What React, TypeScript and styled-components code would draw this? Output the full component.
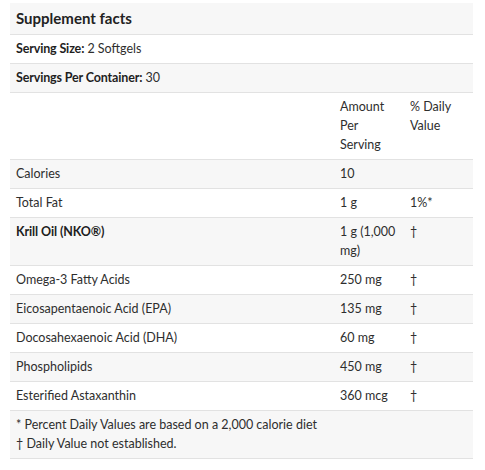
import React, { FC } from 'react';
import styled, { createGlobalStyle } from 'styled-components';

const GlobalStyle = createGlobalStyle`
  body {
    margin: 0;
    background: #ffffff;
    font-family: Lato, "Open Sans", sans-serif;
    color: #2e2e2e;
  }
`;

const Wrapper = styled.div`
  padding: 3px 12px 0 10px;
`;

const Table = styled.table`
  width: 463px;
  border-collapse: collapse;
  font-size: 12.5px;
  line-height: 19px;
`;

const Row = styled.tr<{ $shade?: boolean }>`
  background: ${(p) => (p.$shade ? '#f7f7f7' : '#ffffff')};
  border-bottom: 1px solid #e2e2e2;
`;

const Cell = styled.td<{ $strong?: boolean }>`
  padding: 4px 6px 5px 6px;
  vertical-align: top;
  font-weight: ${(p) => (p.$strong ? 700 : 400)};
  letter-spacing: ${(p) => (p.$strong ? '-0.1px' : 'normal')};
  color: ${(p) => (p.$strong ? '#1e1e1e' : 'inherit')};
`;

const TitleCell = styled.td`
  padding: 5px 6px 5px 6px;
  font-size: 15px;
  line-height: 21px;
  font-weight: 700;
  color: #222222;
`;

const Label = styled.b`
  font-weight: 700;
  letter-spacing: -0.15px;
  color: #1e1e1e;
`;

const LabelCol = styled.col`
  width: 324px;
`;

const AmountCol = styled.col`
  width: 70px;
`;

interface Nutrient {
  name: string;
  amount: string;
  dv: string;
  strong?: boolean;
}

const nutrients: Nutrient[] = [
  { name: 'Calories', amount: '10', dv: '' },
  { name: 'Total Fat', amount: '1 g', dv: '1%*' },
  { name: 'Krill Oil (NKO®)', amount: '1 g (1,000 mg)', dv: '†', strong: true },
  { name: 'Omega-3 Fatty Acids', amount: '250 mg', dv: '†' },
  { name: 'Eicosapentaenoic Acid (EPA)', amount: '135 mg', dv: '†' },
  { name: 'Docosahexaenoic Acid (DHA)', amount: '60 mg', dv: '†' },
  { name: 'Phospholipids', amount: '450 mg', dv: '†' },
  { name: 'Esterified Astaxanthin', amount: '360 mcg', dv: '†' },
];

const App: FC = () => (
  <Wrapper>
    <GlobalStyle />
    <Table>
      <colgroup>
        <LabelCol />
        <AmountCol />
        <col />
      </colgroup>
      <tbody>
        <Row $shade>
          <TitleCell colSpan={3}>Supplement facts</TitleCell>
        </Row>
        <Row>
          <Cell colSpan={3}>
            <Label>Serving Size:</Label> 2 Softgels
          </Cell>
        </Row>
        <Row $shade>
          <Cell colSpan={3}>
            <Label>Servings Per Container:</Label> 30
          </Cell>
        </Row>
        <Row>
          <Cell />
          <Cell>Amount Per Serving</Cell>
          <Cell>% Daily Value</Cell>
        </Row>
        {nutrients.map((n, i) => (
          <Row key={n.name} $shade={i % 2 === 0}>
            <Cell $strong={n.strong}>{n.name}</Cell>
            <Cell>{n.amount}</Cell>
            <Cell>{n.dv}</Cell>
          </Row>
        ))}
        <Row $shade>
          <Cell colSpan={3}>
            * Percent Daily Values are based on a 2,000 calorie diet
            <br />† Daily Value not established.
          </Cell>
        </Row>
      </tbody>
    </Table>
  </Wrapper>
);

export default App;
